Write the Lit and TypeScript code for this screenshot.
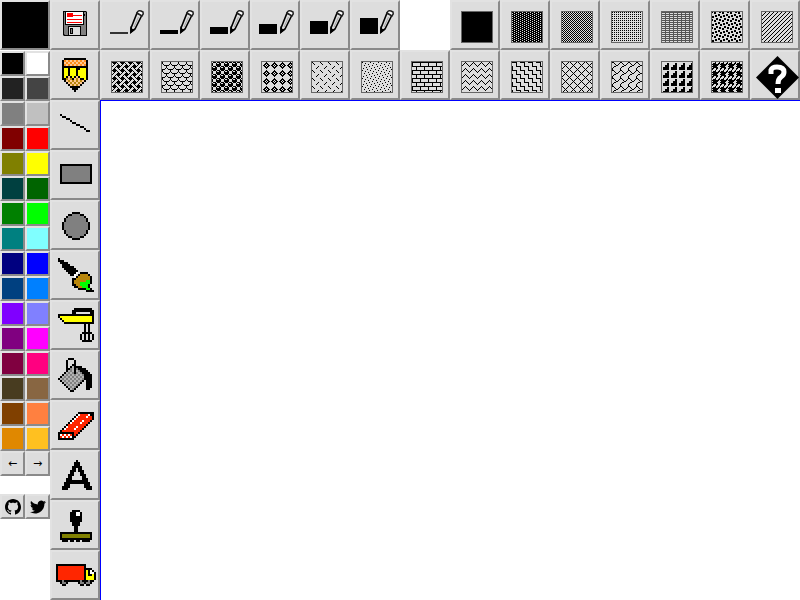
import { LitElement, html, svg, css } from "lit";
import { customElement, state } from "lit/decorators.js";

const INK: Record<string, string> = {
  k: "#000", w: "#fff", g: "#808080", y: "#ffff00", o: "#ff8c1a", p: "#ffc890",
  t: "#b8860b", n: "#00ff00", r: "#ff2600", l: "#c0c0c0", v: "#808000", d: "#b4b4b4",
};

/** Draws rows of letters as square pixels; x and y are button coordinates. */
function sprite(x: number, y: number, rows: string[], size = 2) {
  const out: unknown[] = [];
  rows.forEach((row, j) => {
    let i = 0;
    while (i < row.length) {
      const c = row[i];
      let n = 1;
      while (row[i + n] === c) n++;
      if (INK[c]) {
        out.push(svg`<rect x=${x + i * size} y=${y + j * size} width=${n * size} height=${size} fill=${INK[c]}></rect>`);
      }
      i += n;
    }
  });
  return out;
}

const pencil = sprite(12, 8, [
  ".kkkkkkkkkkk.",
  "kopopopopopok",
  "kpopopopopopk",
  "kopopopopopok",
  "kkkkkkkkkkkkk",
  "kyykyyykkyyyk",
  "kyykyyykyyyyk",
  "kyykyyykyyyyk",
  "kyykyyykyyyyk",
  "kykpkykpkyyyk",
  "kktptkptpkkyk",
  ".kptptptptpk.",
  "..kptptptpk..",
  "...kptptpk...",
  "....kkkkk....",
  ".....kkk.....",
  "......k......",
]);

const line = sprite(10, 14, [
  "k", ".kk", "...kk", ".....k", "......kk", "........kk", "..........kk", "............k", ".............kk",
]);

const circle = sprite(12, 12, [
  ".....kkkk.....",
  "...kkggggkk...",
  "..kggggggggk..",
  ".kggggggggggk.",
  ".kggggggggggk.",
  "kggggggggggggk",
  "kggggggggggggk",
  "kggggggggggggk",
  "kggggggggggggk",
  ".kggggggggggk.",
  ".kggggggggggk.",
  "..kggggggggk..",
  "...kkggggkk...",
  ".....kkkk.....",
]);

const rectangle = svg`<rect x="11" y="15" width="30" height="18" fill="#808080" stroke="#000" stroke-width="2"></rect>`;

const brush = sprite(8, 8, [
  "k",
  "kkk",
  ".kkkk",
  "..kkkk",
  "..kkkkkk",
  "...kkkkkk",
  "....kkkkkk",
  ".....kkkkw.kkkk",
  "......kkw.kttttk",
  "........wkttttttk",
  ".......kktttttttk",
  ".......kttttttnnk",
  ".......ktttnnnnnk",
  ".......kkttnnnnk",
  "........kkttnnnk",
  "..........kkkknnk",
  "..............kkkk",
]);

const mixer = sprite(8, 8, [
  "........kkkkkkkkk",
  ".......kkkkkkkkkkk",
  ".......kk.......kk",
  "kkkkkkkkkkkkkkkkkk",
  "kyyyyyyyyyyyyyyyyk",
  ".kyyyyyyyyyyyyyyyk",
  "..kyyyyyyyyyyyyyyk",
  "...kkkkkkkkkkkkkkk",
  ".............k.k",
  ".............k.k",
  ".............k.k",
  ".............k.k",
  "............kkkkk",
  "...........k.k.k.k",
  "...........k.k.k.k",
  "...........k.k.k.k",
  "............kkkkk",
]);

const bucket = sprite(8, 8, [
  ".....kkk",
  "....k...k",
  "....k...k",
  "....k..kk",
  "....k.kdkkkk",
  "....kkgdkgkkkk",
  "....kdgdkdgkkkk",
  "...kdgdgkgdgkkkk",
  "..kdgdgdgdgdgkkkk",
  ".kdgdgdgdgdgdkkkk",
  "kdgdgdgdgdgdgkkkk",
  ".kdgdgdgdgdgk.kkk",
  "..kdgdgdgdgk..kkk",
  "...kdgdgdgk...kkk",
  "....kdgdgk....kkk",
  ".....kdgk.....kk",
  "......kk",
]);

const eraser = sprite(8, 12, [
  "..........kkkkkkkk",
  ".........kwrrrrwkk",
  "........kwrrrrwrrk",
  ".......kwrrrrrrrrk",
  "......kwrrrrwrrrk",
  ".....kwrrrrwrrrk",
  "....krrrrrrrrrk",
  "...kwrrrrwrrrk",
  "..kwrrrrwrrrk",
  ".krrrrrrrrrk",
  "kkkkkkkkrrk",
  "kwrwrwrkrk",
  "krwrwrwkk",
  "kkkkkkkk",
]);

const letterA = sprite(12, 10, [
  ".......k",
  "......kkk",
  "......kkk",
  ".....kkkkk",
  ".....kk.kk",
  "....kkk.kkk",
  "....kk...kk",
  "...kkk...kkk",
  "...kk.....kk",
  "..kkk.....kkk",
  "..kkkkkkkkkkk",
  ".kkkkkkkkkkkkk",
  ".kkk.......kkk",
  "kkkk.......kkkk",
  "kkk.........kkk",
]);

const stamp = sprite(10, 10, [
  "......kkkk",
  ".....kkkwwk",
  ".....kkkwwk",
  ".....kkkkkk",
  ".....kkkkkk",
  ".....kkkkkk",
  "......kkkk",
  "......kkkk",
  ".......kk",
  ".......kk",
  ".......kk",
  "kkkkkkkkkkkkkkkk",
  "kvvvvvvvvvvvvvvk",
  "kvvvvvvvvvvvvvvk",
  "kkkkkkkkkkkkkkkk",
  ".kkk.kk.kk.kkkk",
]);

const truck = sprite(6, 14, [
  "kkkkkkkkkkkkkkk",
  "krrrrrrrrrrrrrk",
  "krrrrrrrrrrrrrkkkk",
  "krrrrrrrrrrrrrkykwk",
  "krrrrrrrrrrrrrkykwwk",
  "krrrrrrrrrrrrrkykkyk",
  "krrrrrrrrrrrrrkyyyyk",
  "krrrrrrrrrrrrrkyyyyk",
  "kkkgkkkkkkkkgkkkgkk",
  "..kggk.....kggkggk",
  "...kk.......kk.kk",
]);

const floppy = svg`
  <path d="M13 11H36L37 12V36H14L13 35Z" fill="#000"></path>
  <path d="M14 12H36V35H15L14 34Z" fill="#808080"></path>
  <rect x="15" y="11" width="19" height="14" fill="#000"></rect>
  <rect x="16" y="12" width="17" height="12" fill="#fff"></rect>
  <path d="M17 13H23V17H17ZM23 15H32V16H23ZM17 19H32V20H17ZM17 22H32V23H17Z" fill="#f00"></path>
  <rect x="34" y="14" width="1" height="2" fill="#000"></rect>
  <path d="M18 26H31V36H18Z" fill="#000"></path>
  <path d="M19 27H30V35H19Z" fill="#ddd"></path>
  <rect x="20.5" y="28.5" width="2" height="5" fill="#808080" stroke="#000"></rect>`;

const help = svg`
  <path d="M27.500 6L49 27.500L27.500 49L6 27.500Z" fill="#000"></path>
  <path d="M21 24V20Q22 17 27 17Q34 17 34 22Q34 25 31 27Q28 29 28 34" fill="none" stroke="#fff" stroke-width="5"></path>
  <rect x="25" y="38" width="6" height="5" fill="#fff"></rect>`;

function stroke(height: number, x: number) {
  return svg`
    <rect x=${x} y=${34 - height} width="18" height=${height} fill=${height < 3 ? "#333" : "#000"}></rect>
    <path d="M31 28L37 13L42 15L35 29L31 32Z" fill="#ddd" stroke="#000" stroke-width="1.600"></path>
    <path d="M37 13Q38 9 43 12Q44 14 42 16Z" fill="#fff" stroke="#222" stroke-width="1.600"></path>
    <path d="M38.500 17L34 27" stroke="#999" stroke-width="0.800"></path>
    <path d="M30 34L30.500 26L32.500 29L35.500 29.500Z" fill="#000"></path>`;
}

type Item = { name: string; art: unknown };

const TOOLS: Item[] = [
  { name: "Pencil", art: pencil }, { name: "Line", art: line }, { name: "Rectangle", art: rectangle },
  { name: "Oval", art: circle }, { name: "Wacky brush", art: brush }, { name: "Electric mixer", art: mixer },
  { name: "Paint can", art: bucket }, { name: "Eraser", art: eraser }, { name: "Text", art: letterA },
  { name: "Stamps", art: stamp }, { name: "Moving van", art: truck },
];

const STROKES: [number, number][] = [[2, 10], [4, 10], [7, 10], [10, 9], [13, 10], [16, 10]];

// Each texture is an 8 x 8 tile, one byte per row, with its ink.
const TEXTURES: [string, string, string][] = [
  ["Solid", "ffffffffffffffff", "#000"],
  ["Dark dots", "dd77dd77dd77dd77", "#000"],
  ["Half tone", "aa55aa55aa55aa55", "#000"],
  ["Fine dots", "aa00aa00aa00aa00", "#000"],
  ["Grid", "ff11ff11ff11ff11", "#555"],
  ["Terrazzo", "b130031bd8c00c8d", "#000"],
  ["Slanted lines", "1122448811224488", "#000"],
  ["Weave", "f87422478f172271", "#000"],
  ["Scales", "8080413e080814e3", "#000"],
  ["Balls", "77898f8f7798f8f8", "#000"],
  ["Diamonds", "081c366b361c0800", "#000"],
  ["Dashes", "8040200002040800", "#000"],
  ["Sprinkle", "8010022001084004", "#000"],
  ["Bricks", "ff808080ff080808", "#000"],
  ["Zigzag", "1028448201000000", "#000"],
  ["Stairs", "f80808088f808080", "#000"],
  ["Crosshatch", "8244281028448201", "#000"],
  ["Tiles", "c021120c30408080", "#000"],
  ["Triangles", "0006061e1e7e7e7e", "#000"],
  ["Houndstooth", "1173fe7cf87ccc88", "#000"],
];

// The zigzag repeats more tightly than its neighbours.
const TILE_HEIGHT: Record<string, number> = { Zigzag: 6 };

function texture(index: number) {
  const [name, hex, ink] = TEXTURES[index];
  const height = TILE_HEIGHT[name] ?? 8;
  let d = "";
  for (let row = 0; row < height; row++) {
    const byte = parseInt(hex.slice(row * 2, row * 2 + 2), 16);
    for (let col = 0; col < 8; col++) {
      if (byte & (128 >> col)) d += `M${col} ${row}h1v1h-1z`;
    }
  }
  return svg`
    <defs><pattern id=${"t" + index} x="12" y="12" width="8" height=${height} patternUnits="userSpaceOnUse"><path d=${d} fill=${ink}></path></pattern></defs>
    <rect x="12" y="12" width="30" height="30" fill=${`url(#t${index})`}></rect>
    <rect x="11.500" y="11.500" width="31" height="31" fill="none" stroke="#666"></rect>`;
}

const COLORS = [
  "#000000", "#ffffff", "#222222", "#444444", "#808080", "#c0c0c0", "#800000", "#ff0000",
  "#808000", "#ffff00", "#004040", "#006400", "#008000", "#00ff00", "#008080", "#80ffff",
  "#000080", "#0000ff", "#004080", "#0080ff", "#8000ff", "#8080ff", "#800080", "#ff00ff",
  "#800040", "#ff0080", "#483c20", "#886642", "#804000", "#ff8040", "#e08800", "#ffc020",
];

@customElement("app-root")
export class AppRoot extends LitElement {
  @state() private color = COLORS[0];

  static styles = css`
    :host {
      display: grid;
      grid-template-columns: 50px 50px 1fr;
      min-height: 100vh;
      background: #fff;
      font-family: "Liberation Sans", sans-serif;
    }
    button, a {
      box-sizing: border-box;
      display: flex;
      align-items: center;
      justify-content: center;
      margin: 0;
      padding: 0;
      border: 2px solid;
      border-color: #e2e2e2 #8a8a8a #8a8a8a #e2e2e2;
      border-radius: 0;
      background: #ddd;
      color: #000;
      font: 11px/16px "DejaVu Sans", sans-serif;
    }
    .big { width: 50px; height: 50px; }
    .small { width: 25px; height: 25px; }
    .art { display: block; width: 46px; height: 46px; overflow: visible; flex: none; }
    .logo { display: block; width: 16px; height: 16px; }
    .palette { display: flex; flex-direction: column; }
    .swatches, .links { display: flex; flex-wrap: wrap; }
    .swatches { margin-top: 1px; }
    .links { margin-top: 18px; }
    .tools { display: flex; flex-direction: column; }
    .work { display: flex; flex-direction: column; min-width: 0; }
    .options { display: flex; flex-wrap: wrap; }
    .blank { width: 50px; height: 50px; }
    .paper {
      flex: 1;
      border-top: 1px solid #00f;
      border-left: 1px solid #00f;
      background: #fff;
    }
  `;

  private tool(name: string, art: unknown) {
    return html`<button class="big" aria-label=${name}>
      <svg class="art" viewBox="2 2 46 46" aria-hidden="true">${art}</svg>
    </button>`;
  }

  render() {
    return html`
      <aside class="palette">
        <button class="big" aria-label="Current colour" style="background:${this.color}"></button>
        <div class="swatches">
          ${COLORS.map((c) => html`<button class="small" aria-label=${c} style="background:${c}" @click=${() => (this.color = c)}></button>`)}
          <button class="small" aria-label="Previous colours">←</button>
          <button class="small" aria-label="Next colours">→</button>
        </div>
        <div class="links">
          <a class="small" href="#github" aria-label="GitHub">
            <svg class="logo" viewBox="0 0 16 16"><path fill-rule="evenodd" d="M8 0C3.580 0 0 3.580 0 8c0 3.540 2.290 6.530 5.470 7.590.4.070.55-.17.55-.38 0-.19-.01-.82-.01-1.490-2.010.37-2.530-.49-2.690-.94-.09-.23-.48-.94-.82-1.130-.28-.15-.68-.52-.01-.53.63-.01 1.080.58 1.230.82.72 1.210 1.870.87 2.330.66.070-.52.28-.87.51-1.070-1.780-.2-3.640-.89-3.640-3.950 0-.87.31-1.590.82-2.150-.08-.2-.36-1.020.08-2.120 0 0 .67-.21 2.200.82.64-.18 1.320-.27 2-.27s1.360.09 2 .27c1.530-1.040 2.200-.82 2.200-.82.44 1.100.16 1.920.08 2.120.51.56.82 1.270.82 2.150 0 3.070-1.870 3.750-3.650 3.950.29.25.54.73.54 1.480 0 1.070-.01 1.930-.01 2.200 0 .21.15.46.55.38A8.010 8.010 0 0 0 16 8c0-4.420-3.580-8-8-8z"></path></svg>
          </a>
          <a class="small" href="#twitter" aria-label="Twitter">
            <svg class="logo" viewBox="0 0 24 24"><path d="M23.950 4.570a10 10 0 0 1-2.820.77 4.960 4.960 0 0 0 2.160-2.720 9.900 9.900 0 0 1-3.120 1.180 4.920 4.920 0 0 0-8.390 4.480C7.690 8.100 4.070 6.130 1.640 3.160a4.820 4.820 0 0 0-.67 2.480c0 1.710.87 3.210 2.190 4.100a4.900 4.900 0 0 1-2.230-.62v.06a4.920 4.920 0 0 0 3.950 4.830 5 5 0 0 1-2.210.08 4.940 4.940 0 0 0 4.600 3.420A9.870 9.870 0 0 1 0 19.540a13.990 13.990 0 0 0 7.560 2.210c9.050 0 14-7.500 14-13.980 0-.21 0-.42-.02-.63a9.940 9.940 0 0 0 2.460-2.550z"></path></svg>
          </a>
        </div>
      </aside>
      <nav class="tools">
        ${this.tool("Save", floppy)}
        ${TOOLS.map((t) => this.tool(t.name, t.art))}
      </nav>
      <main class="work">
        <div class="options">
          ${STROKES.map(([h, x]) => this.tool(`Stroke ${h}`, stroke(h, x)))}
          <span class="blank"></span>
          ${TEXTURES.map((t, i) => this.tool(t[0], texture(i)))}
          ${this.tool("Help", help)}
        </div>
        <div class="paper"></div>
      </main>
    `;
  }
}
